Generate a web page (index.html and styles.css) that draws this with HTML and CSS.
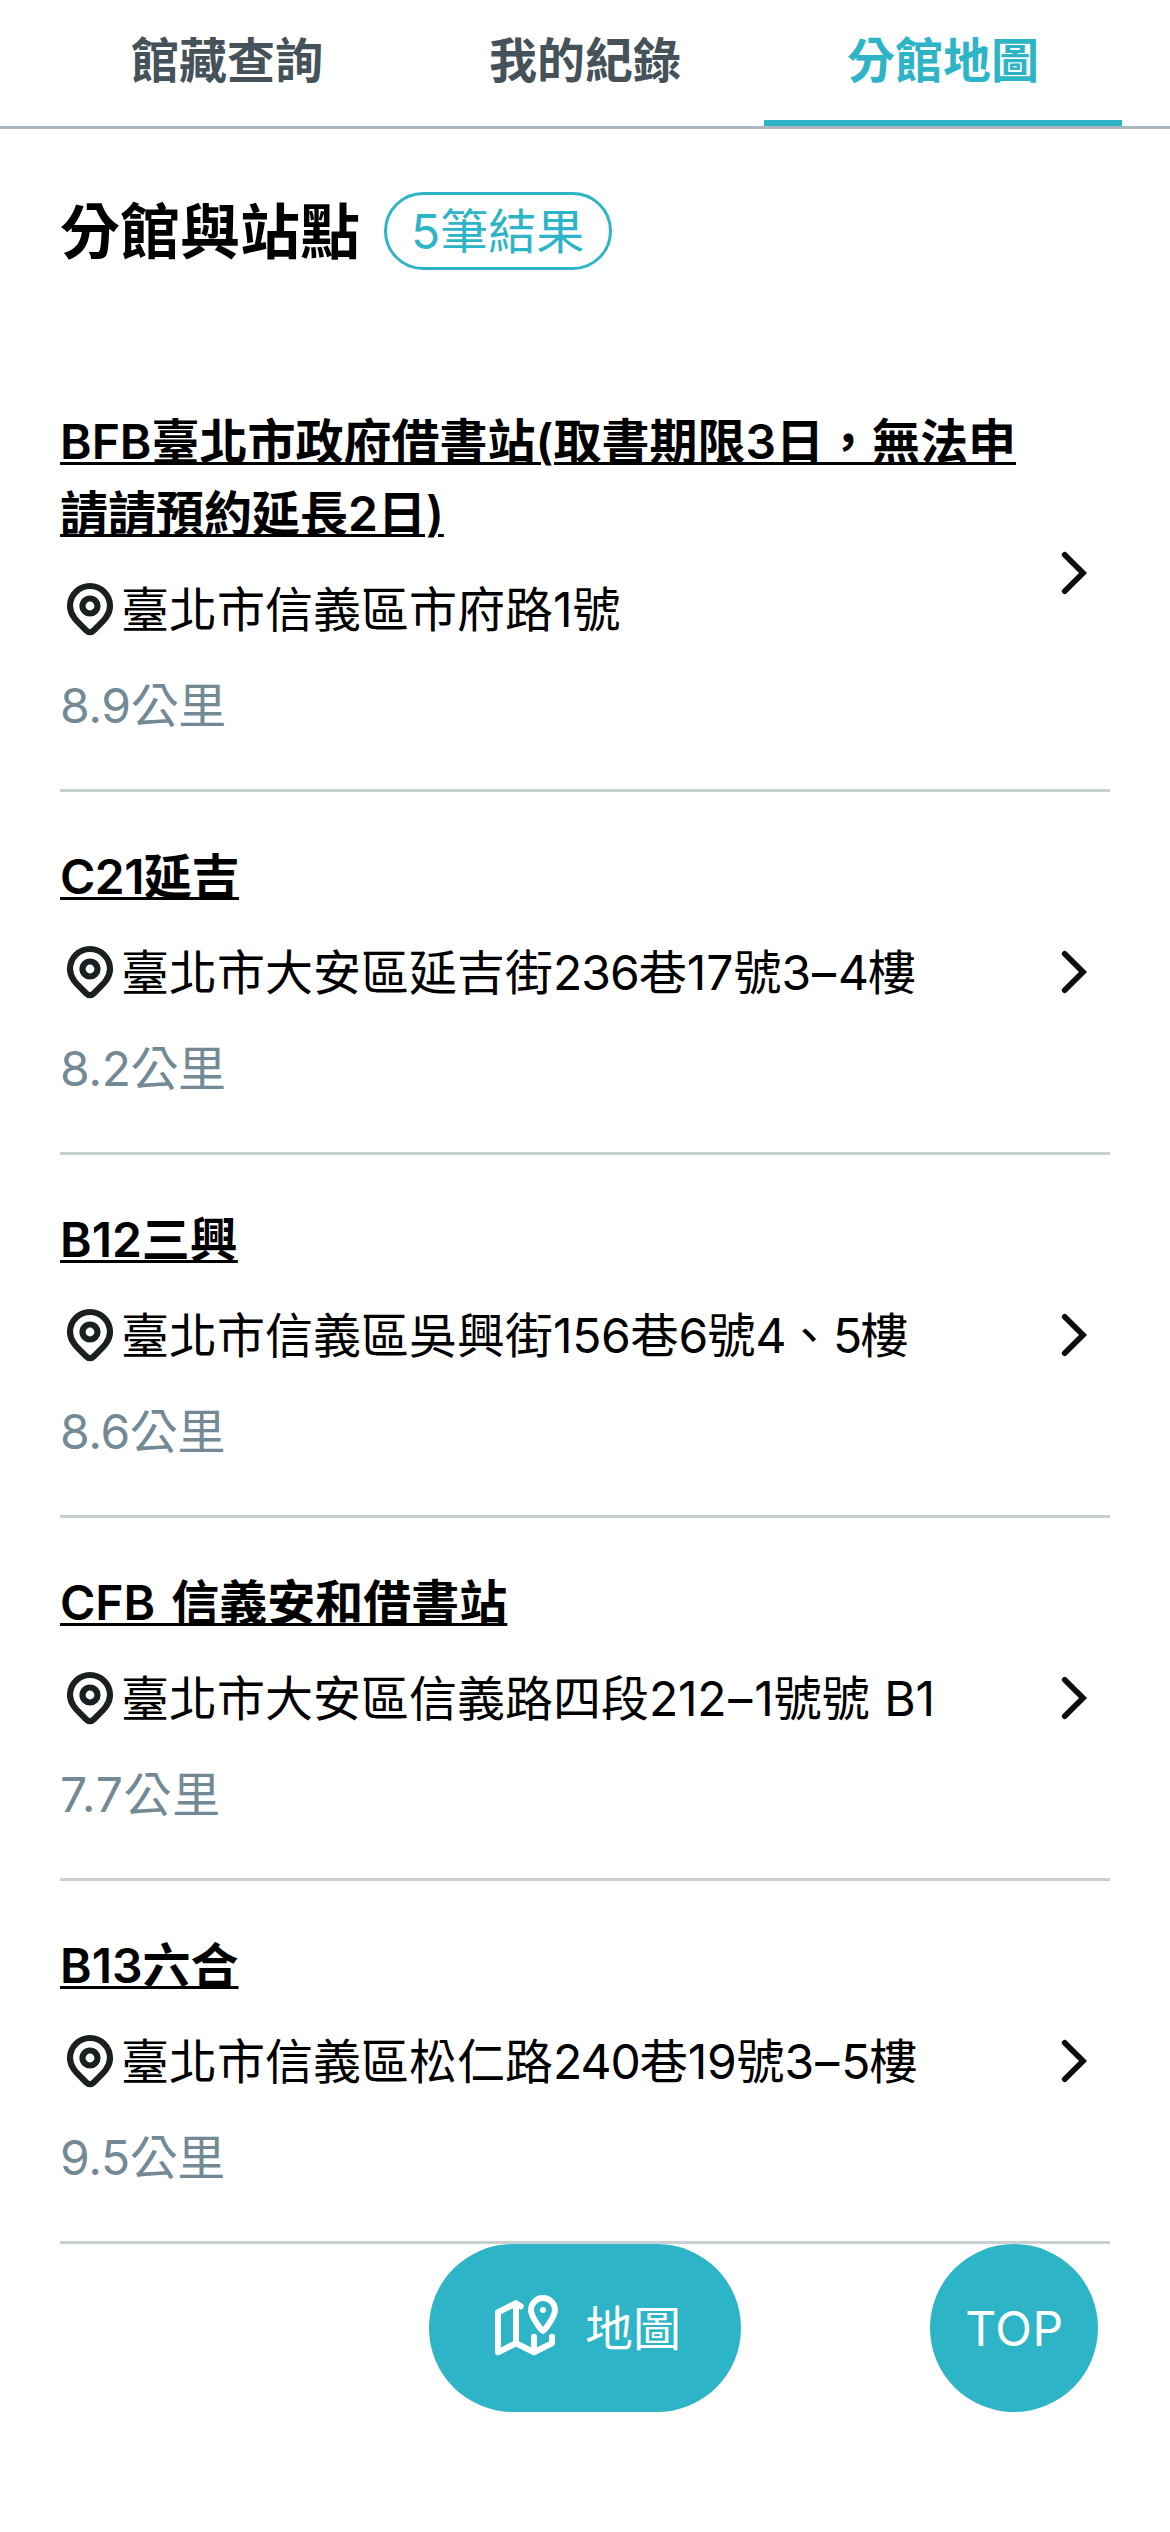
FILE: index.html
```
<!DOCTYPE html>
<html lang="zh-Hant">
<head>
<meta charset="utf-8">
<title>分館地圖</title>
<link rel="stylesheet" href="styles.css">
</head>
<body>
<svg width="0" height="0" class="sprite" aria-hidden="true">
  <symbol id="pin" viewBox="0 0 60 60">
    <path d="M50 27C50 36.500 43 42.500 33.200 51.800Q30 54.500 26.800 51.800C17 42.500 10 36.500 10 27A20 20 0 0 1 50 27Z"/>
    <circle cx="30" cy="27" r="7.500"/>
  </symbol>
  <symbol id="chevron" viewBox="0 0 24 24"><path d="M8.900 5.900L15 12 8.900 18.100"/></symbol>
</svg>
<nav class="tabs">
  <a class="tab">館藏查詢</a>
  <a class="tab">我的紀錄</a>
  <a class="tab active">分館地圖</a>
</nav>
<main>
  <header class="heading">
    <h1>分館與站點</h1>
    <span class="count">5筆結果</span>
  </header>
  <ul class="list">
    <li class="item">
      <div class="info">
        <a class="name">BFB臺北市政府借書站(取書期限3日，無法申請請預約延長2日)</a>
        <p class="address"><svg class="pin"><use href="#pin"/></svg>臺北市信義區市府路1號</p>
        <p class="distance">8.9公里</p>
      </div>
      <svg class="chevron"><use href="#chevron"/></svg>
    </li>
    <li class="item">
      <div class="info">
        <a class="name close">C21延吉</a>
        <p class="address"><svg class="pin"><use href="#pin"/></svg>臺北市大安區延吉街<span class="tight">236</span>巷17號<span class="tight">3</span><span class="dash">–</span><span class="tight">4</span>樓</p>
        <p class="distance">8.2公里</p>
      </div>
      <svg class="chevron"><use href="#chevron"/></svg>
    </li>
    <li class="item">
      <div class="info">
        <a class="name">B12三興</a>
        <p class="address"><svg class="pin"><use href="#pin"/></svg>臺北市信義區吳興街<span class="snug">156</span>巷<span class="tight">6</span>號<span class="narrow">4</span>、<span class="narrow">5</span>樓</p>
        <p class="distance">8.6公里</p>
      </div>
      <svg class="chevron"><use href="#chevron"/></svg>
    </li>
    <li class="item">
      <div class="info">
        <a class="name spaced">CFB 信義安和借書站</a>
        <p class="address"><svg class="pin"><use href="#pin"/></svg>臺北市大安區信義路四段<span class="snug">212</span><span class="dash">–</span>1號號 B1</p>
        <p class="distance sevens">7.7公里</p>
      </div>
      <svg class="chevron"><use href="#chevron"/></svg>
    </li>
    <li class="item">
      <div class="info">
        <a class="name">B13六合</a>
        <p class="address"><svg class="pin"><use href="#pin"/></svg>臺北市信義區松仁路<span class="tight">240</span>巷<span class="snug">19</span>號<span class="tight">3</span><span class="dash">–</span><span class="tight">5</span>樓</p>
        <p class="distance">9.5公里</p>
      </div>
      <svg class="chevron"><use href="#chevron"/></svg>
    </li>
  </ul>
</main>
<button class="fab map">
  <svg class="map-icon" viewBox="0 0 72 72">
    <path d="M31.700 14.300L27 11.300 9 20.300V60.300L27 51.300 45 60.300 63 51.300V44.700M27 11.300V51.300M45 44.700V60.300"/>
    <path d="M54 39C52.500 39 42 24.500 42 18A12 12 0 0 1 66 18C66 24.500 55.500 39 54 39Z"/>
    <circle class="dot" cx="54" cy="18" r="3"/>
  </svg>
  地圖
</button>
<button class="fab top">TOP</button>
</body>
</html>
```
FILE: styles.css
```
* { box-sizing: border-box; margin: 0; padding: 0; }
body {
  min-height: 2532px;
  background: #fff;
  color: #000;
  font: 400 48px/72px Inter, "Noto Sans CJK TC", sans-serif;
}
svg { flex: none; fill: none; stroke-linecap: round; stroke-linejoin: round; }
.sprite { position: absolute; }
.tabs {
  display: flex;
  height: 129px;
  padding: 0 48px;
  border-bottom: 3px solid #aab7c0;
}
.tab {
  flex: 1;
  padding-top: 25px;
  text-align: center;
  font-weight: 700;
  color: #455259;
}
.tab.active { color: #2eb4c7; border-bottom: 6px solid #2eb4c7; }
main { padding: 63px 60px 0; }
.heading {
  display: flex;
  gap: 24px;
  height: 78px;
  margin-bottom: 87px;
}
h1 { padding-top: 1px; font-size: 60px; line-height: 78px; font-weight: 700; }
.count {
  width: 228px;
  height: 78px;
  padding: 1px 0 0 24px;
  border: 3px solid #2eb4c7;
  border-radius: 39px;
  color: #2eb4c7;
}
.list { list-style: none; }
.item {
  display: flex;
  align-items: center;
  justify-content: space-between;
  padding: 49px 0 47px;
  border-bottom: 3px solid #c8d0d4;
}
.info { display: flex; flex-direction: column; align-items: flex-start; gap: 24px; max-width: 970px; }
.name {
  font-weight: 600;
  text-decoration: underline;
  text-decoration-thickness: 3px;
  text-underline-offset: 3px;
}
.close { letter-spacing: -0.5px; }
.spaced { word-spacing: 4px; }
.address { display: flex; align-items: center; white-space: pre; word-spacing: 1px; }
.distance { color: #738a96; letter-spacing: -0.4px; }
.sevens { letter-spacing: 0.7px; }
.snug { letter-spacing: -0.3px; }
.tight { letter-spacing: -1px; }
.narrow { letter-spacing: -1.5px; }
.dash { margin: 0 2px; }
.pin { width: 60px; height: 60px; margin: -2px 1px 0 0; stroke: #1a1f21; stroke-width: 6.2; }
.chevron {
  width: 72px;
  height: 72px;
  margin-top: -2px;
  stroke: #0d0e10;
  stroke-width: 1.9;
  stroke-linejoin: miter;
}
.fab {
  position: fixed;
  bottom: 120px;
  display: flex;
  align-items: center;
  justify-content: center;
  height: 168px;
  padding-top: 2px;
  border: 0;
  border-radius: 84px;
  background: #2eb4c7;
  color: #fff;
  font: inherit;
}
.map { left: 429px; width: 312px; gap: 24px; }
.map-icon { width: 72px; height: 72px; margin-top: -2px; stroke: #fff; stroke-width: 6; }
.dot { fill: #fff; stroke: none; }
.top { left: 930px; width: 168px; padding-left: 1px; letter-spacing: 0.6px; }
```
